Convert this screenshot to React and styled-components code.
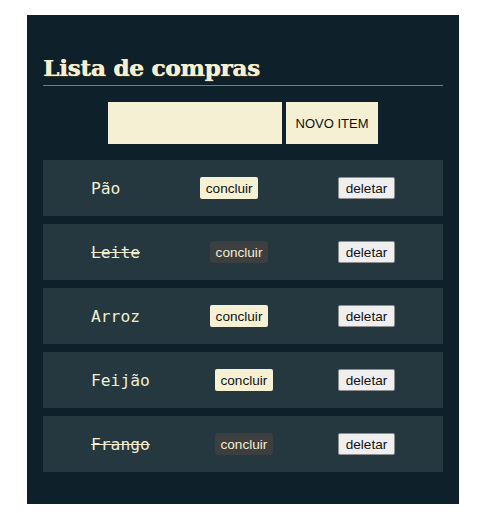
import React, { useState } from "react";
import styled, { createGlobalStyle } from "styled-components";

const Global = createGlobalStyle`
  html, body { margin: 0; padding: 0; background: #ffffff; }
  body { font-family: "Liberation Sans", Arial, sans-serif; }
`;

const Panel = styled.main`
  box-sizing: border-box;
  width: 432px;
  margin: 15px 0 0 27px;
  padding: 0 16px 32px;
  background: #0e2029;
`;

const Header = styled.header`
  padding-top: 38px;
  border-bottom: 1px solid #6f7f80;
  padding-bottom: 3px;
`;

const Title = styled.h1`
  margin: 0;
  font-family: "DejaVu Serif", "Liberation Serif", serif;
  font-weight: 700;
  font-size: 23px;
  line-height: 29px;
  letter-spacing: -0.2px;
  color: #f6efd2;
  text-shadow: 0.6px 0 0 #f6efd2, 1px 1px 0 #3b3320;
`;

const Form = styled.form`
  display: flex;
  justify-content: center;
  gap: 4px;
  margin-top: 16px;
`;

const Input = styled.input`
  box-sizing: border-box;
  width: 174px;
  height: 42px;
  border: none;
  background: #f5f0d3;
  outline: none;
`;

const AddButton = styled.button`
  box-sizing: border-box;
  width: 92px;
  height: 42px;
  border: none;
  background: #f5f0d3;
  color: #111;
  font-family: "Liberation Sans", Arial, sans-serif;
  font-size: 13px;
  padding: 0;
`;

const List = styled.ul`
  list-style: none;
  margin: 16px 0 0;
  padding: 0;
  display: flex;
  flex-direction: column;
  gap: 8px;
`;

const Row = styled.li`
  box-sizing: border-box;
  height: 56px;
  padding: 0 48px;
  display: flex;
  align-items: center;
  justify-content: space-between;
  background: #253840;
`;

const ItemName = styled.span`
  font-family: "DejaVu Sans Mono", "Liberation Mono", monospace;
  font-size: 16.3px;
  color: #f3ecd0;
  text-decoration: ${(p) => (p.$done ? "line-through" : "none")};
`;

const DoneButton = styled.button`
  box-sizing: border-box;
  height: 22px;
  width: 58px;
  padding: 0;
  border: none;
  border-radius: 2px;
  font-family: "Liberation Sans", Arial, sans-serif;
  font-size: 13.6px;
  background: ${(p) => (p.$done ? "#3c3e40" : "#f6f1d3")};
  color: ${(p) => (p.$done ? "#f3ecd0" : "#111")};
`;

const DeleteButton = styled.button`
  box-sizing: border-box;
  height: 22px;
  width: 57px;
  padding: 0;
  border: 1px solid #8f8f8f;
  border-radius: 2px;
  font-family: "Liberation Sans", Arial, sans-serif;
  font-size: 13.6px;
  background: #efefef;
  color: #111;
`;

const initial = [
  { name: "Pão", done: false },
  { name: "Leite", done: true },
  { name: "Arroz", done: false },
  { name: "Feijão", done: false },
  { name: "Frango", done: true },
];

export default function App() {
  const [items] = useState(initial);
  return (
    <>
      <Global />
      <Panel>
        <Header>
          <Title>Lista de compras</Title>
        </Header>
        <Form onSubmit={(e) => e.preventDefault()}>
          <Input type="text" />
          <AddButton type="submit">NOVO ITEM</AddButton>
        </Form>
        <List>
          {items.map((it) => (
            <Row key={it.name}>
              <ItemName $done={it.done}>{it.name}</ItemName>
              <DoneButton $done={it.done}>concluir</DoneButton>
              <DeleteButton>deletar</DeleteButton>
            </Row>
          ))}
        </List>
      </Panel>
    </>
  );
}
